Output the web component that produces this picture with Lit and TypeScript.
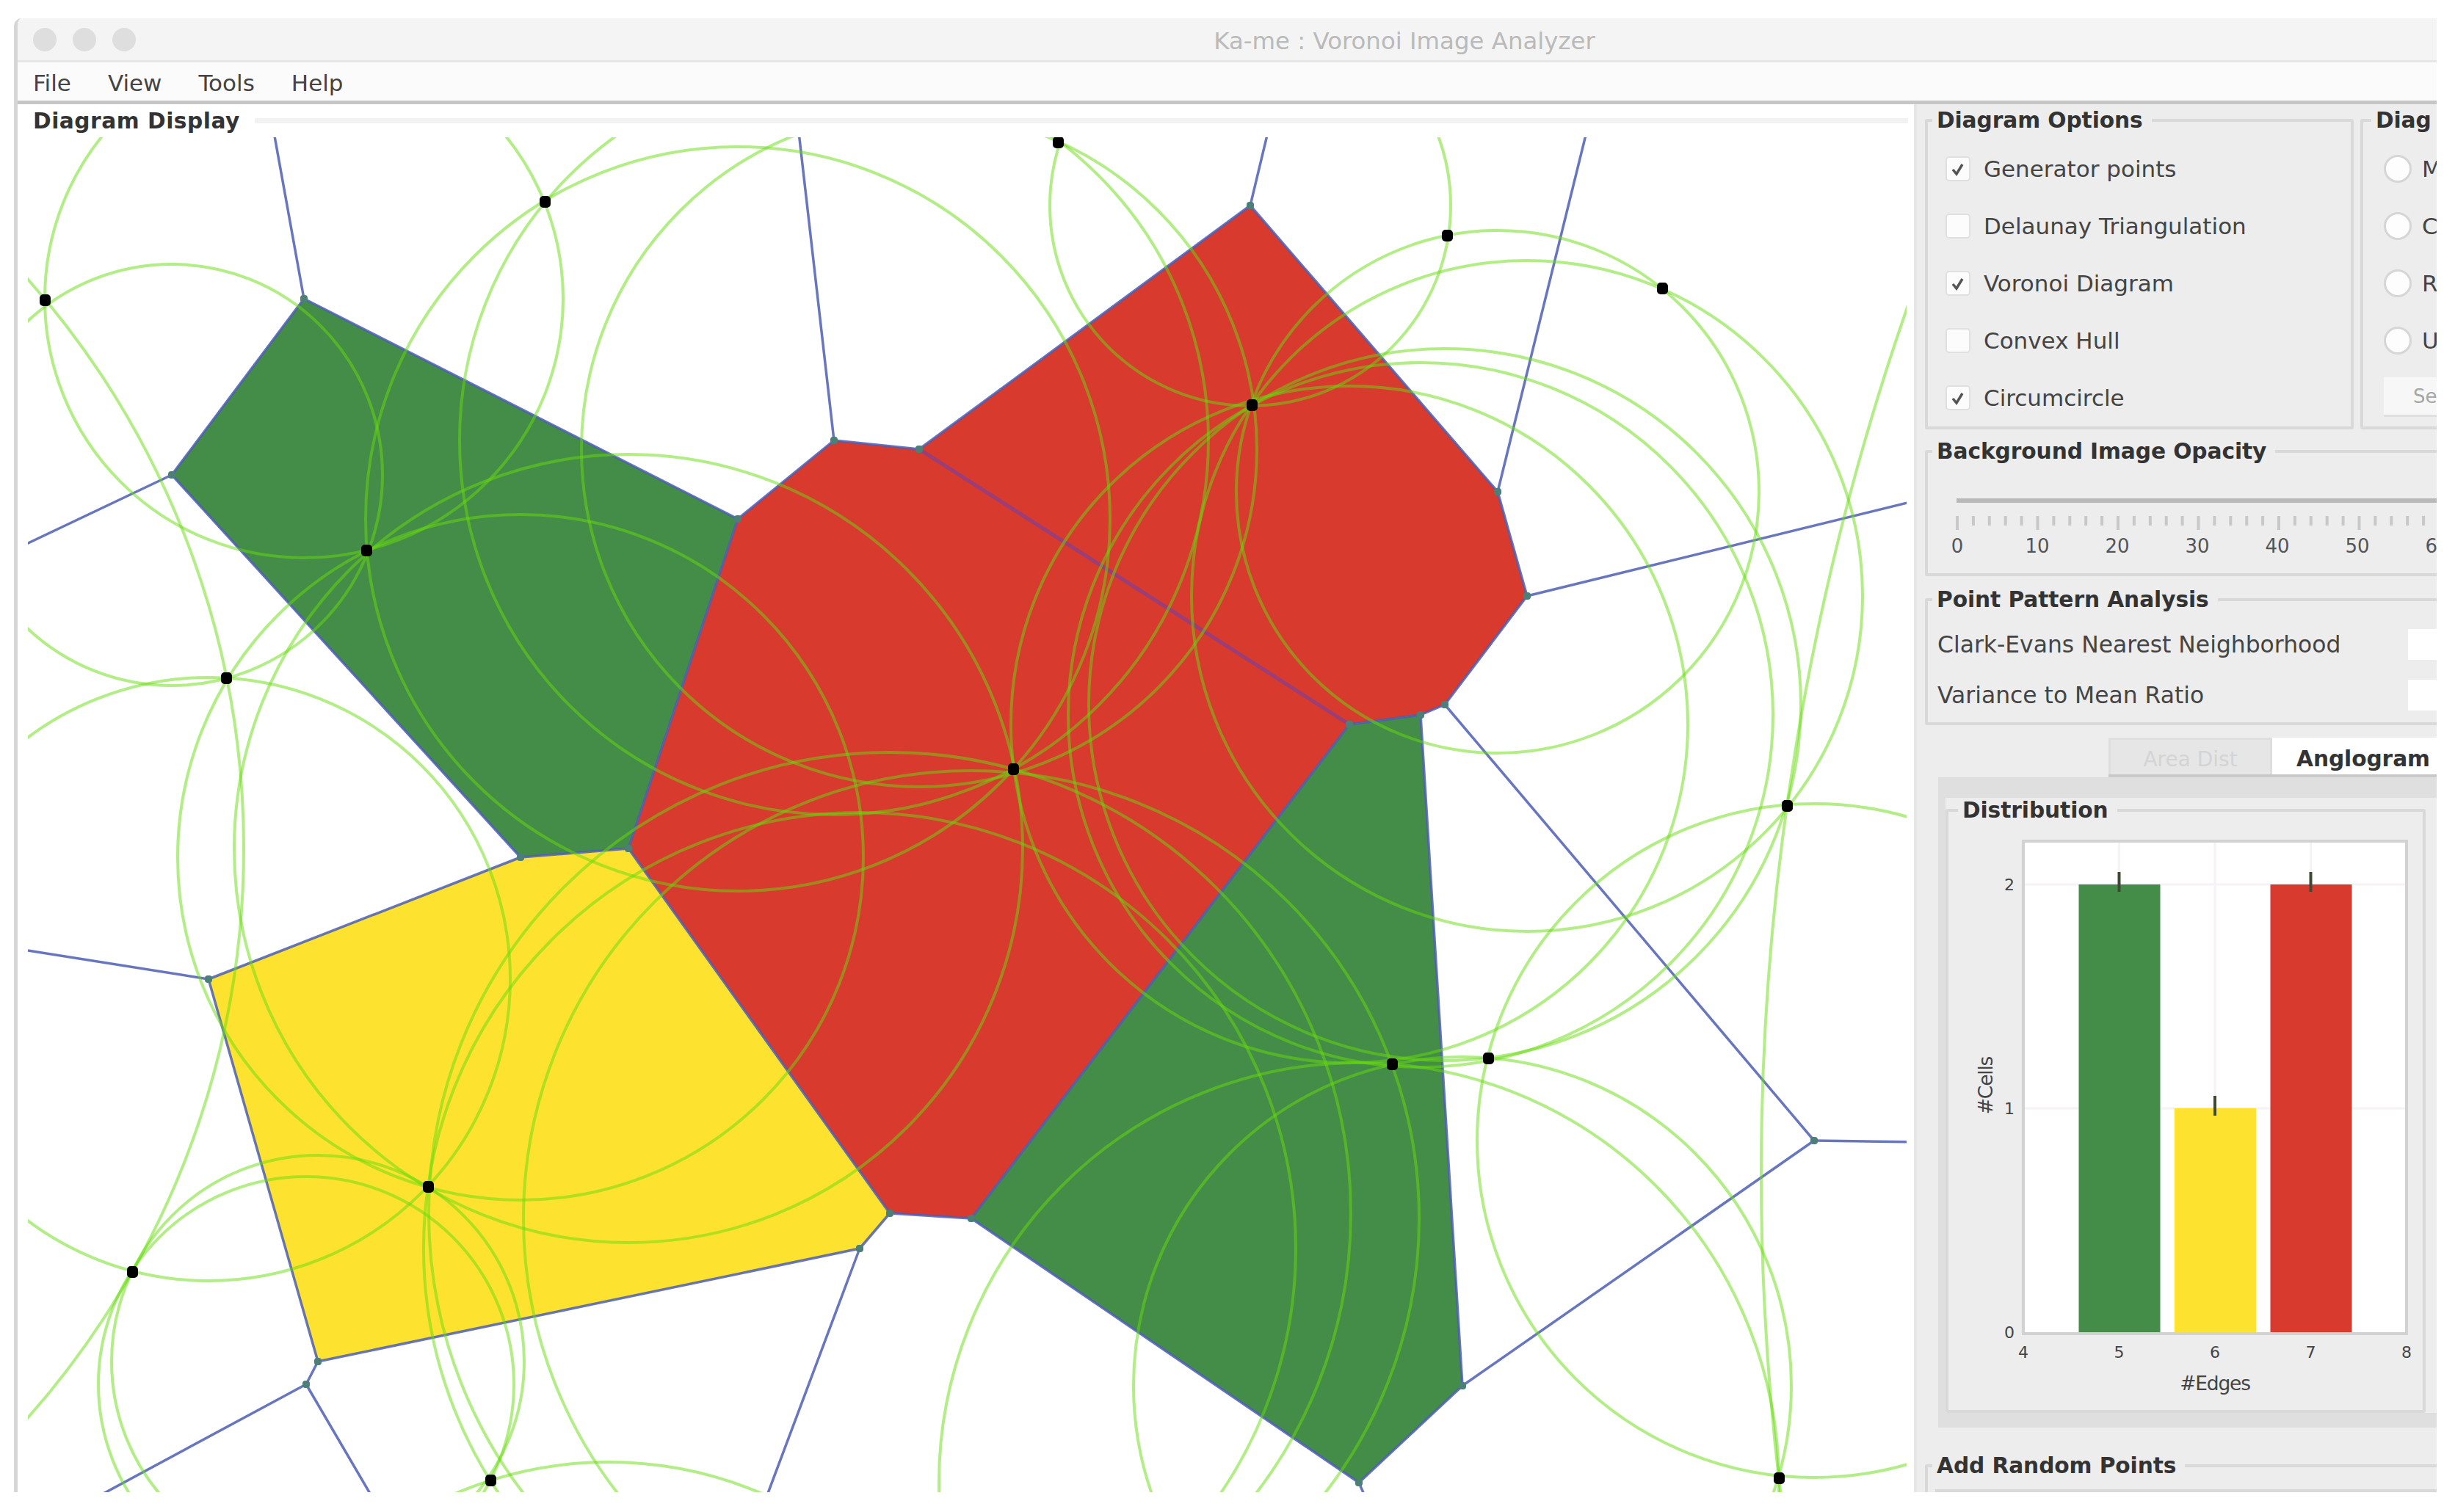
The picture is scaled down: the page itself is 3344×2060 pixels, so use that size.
import { LitElement, html, svg, css } from "lit";
import { customElement, property } from "lit/decorators.js";

const GREEN = "#448d48";
const RED = "#d83a2e";
const YELLOW = "#fde32f";

type Point = [number, number];

// voronoi vertices with the radius of their circumcircle
const VERTICES: Record<string, [number, number, number]> = {
  a: [414, 407, 353],
  b: [234, 647, 287],
  c: [1005, 707, 507],
  d: [1136, 600, 510],
  e: [1252, 612, 460],
  f: [1703, 280, 273],
  g: [2040, 670, 356],
  h: [2080, 812, 457],
  i: [1968, 960, 485],
  j: [1935, 974, 480],
  k: [1838, 987, 461],
  l: [1851, 2020, 572],
  m: [1992, 1888, 448],
  n: [2471, 1554, 459],
  o: [1323, 1660, 610],
  p: [1212, 1653, 628],
  q: [1171, 1701, 594],
  r: [433, 1855, 281],
  s: [417, 1886, 283],
  t: [284, 1334, 411],
  u: [709, 1168, 467],
  v: [856, 1156, 537],
};

// circumcircles whose centre is out of view
const OUTER: [number, number, number][] = [
  [-838, 1156, 1170],
  [829, 2523, 531],
  [6000, 1599, 3601],
];

const CELLS: [string, string][] = [
  ["abuvc", GREEN],
  ["defghijkopvc", RED],
  ["jkolm", GREEN],
  ["tuvpqr", YELLOW],
];

const EDGES =
  "ab bu uv vc ca cd de ef fg gh hi ij jk ko op pv jm ml lo in nm tu pq qr rt rs".split(" ");

const RAYS: [string, number, number][] = [
  ["a", 373, 180],
  ["b", -838, 1156],
  ["t", -838, 1156],
  ["d", 1088, 180],
  ["f", 1727, 180],
  ["g", 2161, 180],
  ["h", 2700, 660],
  ["n", 2700, 1557],
  ["q", 1042, 2045],
  ["s", 122, 2045],
  ["s", 510, 2045],
  ["l", 1862, 2045],
];

const POINTS: Point[] = [
  [61, 409], [742, 275], [499, 750], [308, 924], [1441, 194], [1971, 321],
  [2264, 393], [1705, 552], [583, 1617], [180, 1733], [668, 2017],
  [1380, 1048], [1896, 1450], [2027, 1442], [2434, 1098], [2423, 2014],
];

@customElement("voronoi-diagram")
class VoronoiDiagram extends LitElement {
  static styles = css`
    :host {
      display: block;
    }
    svg {
      display: block;
    }
    .edge {
      stroke: #4d5fb4;
      stroke-width: 3.5;
      opacity: 0.85;
    }
    .shared {
      stroke: #8f3f86;
      stroke-width: 5;
      opacity: 0.85;
    }
    .circle {
      fill: none;
      stroke: #66dc0c;
      stroke-width: 4;
      opacity: 0.5;
    }
    .vertex {
      fill: #4b7f78;
    }
  `;

  line(x1: number, y1: number, x2: number, y2: number) {
    return svg`<line class="edge" x1=${x1} y1=${y1} x2=${x2} y2=${y2} />`;
  }

  render() {
    const v = VERTICES;
    return html`
      <svg width="2559" height="1846" viewBox="38 187 2559 1846">
        ${CELLS.map(
          ([ids, fill]) => svg`<polygon fill=${fill} points=${[...ids]
            .map((id) => `${v[id][0]},${v[id][1]}`)
            .join(" ")} />`
        )}
        <line class="shared" x1=${v.e[0]} y1=${v.e[1]} x2=${v.k[0]} y2=${v.k[1]} />
        ${EDGES.map(([s, t]) => this.line(v[s][0], v[s][1], v[t][0], v[t][1]))}
        ${RAYS.map(([s, x, y]) => this.line(v[s][0], v[s][1], x, y))}
        ${[...Object.values(v), ...OUTER].map(
          ([x, y, r]) => svg`<circle class="circle" cx=${x} cy=${y} r=${r} />`
        )}
        ${Object.values(v).map(
          ([x, y]) => svg`<rect class="vertex" x=${x - 5} y=${y - 5} width="10" height="10" rx="4" />`
        )}
        ${POINTS.map(
          ([x, y]) => svg`<rect x=${x - 7} y=${y - 8} width="15" height="16" rx="5" />`
        )}
      </svg>
    `;
  }
}

@customElement("edge-histogram")
class EdgeHistogram extends LitElement {
  @property({ attribute: false }) bars = [
    { edges: 5, cells: 2, fill: GREEN },
    { edges: 6, cells: 1, fill: YELLOW },
    { edges: 7, cells: 2, fill: RED },
  ];

  static styles = css`
    :host {
      display: block;
    }
    svg {
      display: block;
      margin: -1px 0 0 -4px;
      font-family: "DejaVu Sans", sans-serif;
      fill: #444;
    }
    .plot {
      fill: #fff;
      stroke: #d2d2d2;
      stroke-width: 4;
    }
    .grid {
      stroke: #f6f2f6;
      stroke-width: 3;
    }
    .error {
      stroke: #3c4a34;
      stroke-width: 4;
    }
    .tick {
      font-size: 22px;
      text-anchor: middle;
    }
    .axis {
      font-size: 26.5px;
      letter-spacing: -1.2px;
      text-anchor: middle;
    }
  `;

  x(edges: number) {
    return 106 + (edges - 4) * 130.5;
  }

  y(cells: number) {
    return 695 - cells * 305;
  }

  render() {
    return html`
      <svg width="648" height="800" viewBox="0 0 648 800">
        <rect class="plot" x="106" y="26" width="522" height="671" />
        ${[5, 6, 7].map(
          (n) => svg`<line class="grid" x1=${this.x(n)} x2=${this.x(n)} y1="28" y2="695" />`
        )}
        ${[1, 2].map(
          (n) => svg`<line class="grid" x1="108" x2="626" y1=${this.y(n)} y2=${this.y(n)} />`
        )}
        ${this.bars.map(
          (b) => svg`
            <rect x=${this.x(b.edges) - 55} y=${this.y(b.cells)} width="111"
              height=${695 - this.y(b.cells)} fill=${b.fill} />
            <line class="error" x1=${this.x(b.edges)} x2=${this.x(b.edges)}
              y1=${this.y(b.cells) - 17} y2=${this.y(b.cells) + 10} />`
        )}
        ${[0, 1, 2].map((n) => svg`<text class="tick" x="87" y=${this.y(n) + 8}>${n}</text>`)}
        ${[4, 5, 6, 7, 8].map((n) => svg`<text class="tick" x=${this.x(n)} y="730">${n}</text>`)}
        <text class="axis" x="367" y="774">#Edges</text>
        <text class="axis" transform="translate(64 359) rotate(-90)">#Cells</text>
      </svg>
    `;
  }
}

@customElement("app-root")
class AppRoot extends LitElement {
  options = [
    { label: "Generator points", checked: true },
    { label: "Delaunay Triangulation", checked: false },
    { label: "Voronoi Diagram", checked: true },
    { label: "Convex Hull", checked: false },
    { label: "Circumcircle", checked: true },
  ];

  static styles = css`
    :host {
      display: block;
      box-sizing: border-box;
      width: 3344px;
      height: 2060px;
      padding: 25px 25px 27px 19px;
      background: #fff;
      color: #444;
      font: 31px/34px "DejaVu Sans", sans-serif;
    }
    * {
      box-sizing: border-box;
    }
    .window {
      display: flex;
      flex-direction: column;
      width: 3300px;
      height: 2008px;
      overflow: hidden;
      white-space: nowrap;
      background: #ededed;
      border-left: 5px solid #d6d6d8;
      border-top-left-radius: 10px;
    }
    /* the window is wider than the visible part, the title is centred on all of it */
    .titlebar {
      display: grid;
      grid-template-columns: 1fr auto 1fr;
      align-items: center;
      flex: none;
      width: 3757px;
      height: 60px;
      padding-left: 21px;
      background: #f4f4f4;
      border-bottom: 3px solid #e6e6e6;
      color: #bababa;
    }
    .lights {
      display: flex;
      gap: 22px;
    }
    .lights i {
      width: 32px;
      height: 32px;
      border-radius: 50%;
      background: #dedede;
    }
    .title {
      padding-top: 5px;
      font-size: 32.4px;
    }
    .menubar {
      display: flex;
      align-items: center;
      flex: none;
      gap: 50px;
      height: 57px;
      padding: 4px 0 0 21px;
      background: #fbfbfb;
      border-bottom: 5px solid #c6c6c6;
    }
    .body {
      display: flex;
      flex: 1;
      min-height: 0;
    }
    .display {
      flex: none;
      width: 2587px;
      background: #fff;
      border-right: 4px solid #e6e6e6;
    }
    .display-title {
      display: flex;
      align-items: center;
      gap: 20px;
      height: 45px;
      padding: 0 8px 0 21px;
    }
    .display-title b {
      letter-spacing: 0.5px;
    }
    .display-title::after {
      content: "";
      flex: 1;
      height: 7px;
      background: #f3f2f3;
    }
    voronoi-diagram {
      margin-left: 14px;
    }
    b,
    legend {
      color: #333;
      font-weight: bold;
      font-size: 29.7px;
      letter-spacing: -0.1px;
    }
    .panel {
      flex: none;
      width: 800px;
      padding: 5px 0 0 11px;
    }
    .columns {
      display: flex;
      gap: 9px;
    }
    fieldset {
      display: block;
      flex: none;
      min-width: 0;
      margin: 0;
      padding: 0;
      border: 4px solid #d9d9d9;
      border-radius: 3px;
    }
    legend {
      height: 34px;
      margin-left: 6px;
      padding: 0 12px 0 6px;
    }
    .options {
      width: 584px;
      height: 438px;
    }
    .modes {
      width: 300px;
      height: 438px;
    }
    .modes legend {
      margin-left: 11px;
    }
    .row {
      display: flex;
      align-items: center;
      gap: 18px;
      height: 78px;
      padding-left: 24px;
    }
    .options .row:first-of-type,
    .modes .row:first-of-type {
      margin-top: 10px;
    }
    .check {
      width: 34px;
      height: 34px;
      background: #fcfcfc;
      border: 2px solid #e0e0e0;
      border-radius: 5px;
    }
    .check svg {
      display: block;
    }
    .radio {
      width: 38px;
      height: 38px;
      background: #fdfdfd;
      border: 3px solid #d6d6d6;
      border-radius: 50%;
    }
    .modes .row {
      padding-left: 28px;
      gap: 14px;
    }
    .select {
      width: 240px;
      height: 54px;
      margin: 11px 0 0 28px;
      padding: 9px 0 0 40px;
      background: #f7f7f7;
      border-bottom: 3px solid #e0e0e0;
      color: #a6a6a6;
      font-size: 26px;
    }
    .opacity {
      width: 800px;
      height: 187px;
      margin-top: 13px;
    }
    .opacity svg {
      display: block;
      margin: 30px 0 0 0;
    }
    .track {
      stroke: #b9b9b9;
      stroke-width: 6;
    }
    .mark {
      stroke: #c8c8c8;
      stroke-width: 4;
    }
    .number {
      fill: #555;
      font-size: 26px;
      text-anchor: middle;
    }
    .pattern {
      width: 800px;
      height: 188px;
      margin-top: 15px;
    }
    .pattern div {
      display: flex;
      align-items: center;
      justify-content: space-between;
      height: 69px;
      padding-left: 13px;
      font-size: 31.4px;
    }
    .pattern div:first-of-type {
      margin-top: 9px;
    }
    .pattern i {
      width: 138px;
      height: 42px;
      background: #fff;
    }
    .tabs {
      display: flex;
      height: 54px;
      margin: 17px 0 0 250px;
      border-bottom: 4px solid #c9c9c9;
    }
    .tab {
      flex: none;
      width: 223px;
      padding-top: 10px;
      border: 3px solid #dedede;
      border-bottom: 0;
      background: #e6e6e6;
      color: #d4d4d4;
      font-size: 28px;
      text-align: center;
    }
    .tab.active {
      width: 320px;
      padding: 12px 0 0 33px;
      border: 0;
      background: #fff;
      text-align: left;
    }
    .pane {
      width: 800px;
      height: 886px;
      margin-left: 18px;
      padding: 28px 0 0 10px;
      background: #dfdfdf;
    }
    .inner {
      height: 838px;
      background: #ededed;
    }
    .distribution {
      width: 654px;
      height: 838px;
    }
    .distribution legend {
      margin-left: 13px;
    }
    .random {
      width: 800px;
      height: 160px;
      margin-top: 35px;
    }
    .random div {
      height: 30px;
      margin: 15px 0 0 10px;
      background: #d8d8d8;
    }
  `;

  renderScale() {
    const ticks = Array.from({ length: 30 }, (_, n) => n);
    return html`
      <svg width="720" height="110">
        <line class="track" x1="39" x2="720" y1="20" y2="20" />
        ${ticks.map((n) => {
          const x = 40 + n * 21.9;
          return svg`<line class="mark" x1=${x} x2=${x} y1="41" y2=${n % 5 ? 54 : 60} />`;
        })}
        ${[0, 10, 20, 30, 40, 50, 60].map(
          (n) => svg`<text class="number" x=${40 + n * 10.9} y="91">${n}</text>`
        )}
      </svg>
    `;
  }

  render() {
    return html`
      <div class="window">
        <div class="titlebar">
          <div class="lights"><i></i><i></i><i></i></div>
          <span class="title">Ka-me : Voronoi Image Analyzer</span>
        </div>
        <div class="menubar">
          <span>File</span><span>View</span><span>Tools</span><span>Help</span>
        </div>
        <div class="body">
          <div class="display">
            <div class="display-title"><b>Diagram Display</b></div>
            <voronoi-diagram></voronoi-diagram>
          </div>
          <div class="panel">
            <div class="columns">
              <fieldset class="options">
                <legend>Diagram Options</legend>
                ${this.options.map(
                  (o) => html`
                    <div class="row">
                      <span class="check">
                        ${o.checked
                          ? html`<svg width="30" height="30">
                              <path d="M8 16l5 6 8-13" fill="none" stroke="#555" stroke-width="3.5" />
                            </svg>`
                          : ""}
                      </span>
                      <span>${o.label}</span>
                    </div>
                  `
                )}
              </fieldset>
              <fieldset class="modes">
                <legend>Diag</legend>
                ${["M", "C", "R", "U"].map(
                  (label) => html`<div class="row"><span class="radio"></span>${label}</div>`
                )}
                <div class="select">Se</div>
              </fieldset>
            </div>
            <fieldset class="opacity">
              <legend>Background Image Opacity</legend>
              ${this.renderScale()}
            </fieldset>
            <fieldset class="pattern">
              <legend>Point Pattern Analysis</legend>
              <div><span>Clark-Evans Nearest Neighborhood</span><i></i></div>
              <div><span>Variance to Mean Ratio</span><i></i></div>
            </fieldset>
            <div class="tabs">
              <span class="tab">Area Dist</span>
              <span class="tab active"><b>Anglogram</b></span>
            </div>
            <div class="pane">
              <div class="inner">
                <fieldset class="distribution">
                  <legend>Distribution</legend>
                  <edge-histogram></edge-histogram>
                </fieldset>
              </div>
            </div>
            <fieldset class="random">
              <legend>Add Random Points</legend>
              <div></div>
            </fieldset>
          </div>
        </div>
      </div>
    `;
  }
}
